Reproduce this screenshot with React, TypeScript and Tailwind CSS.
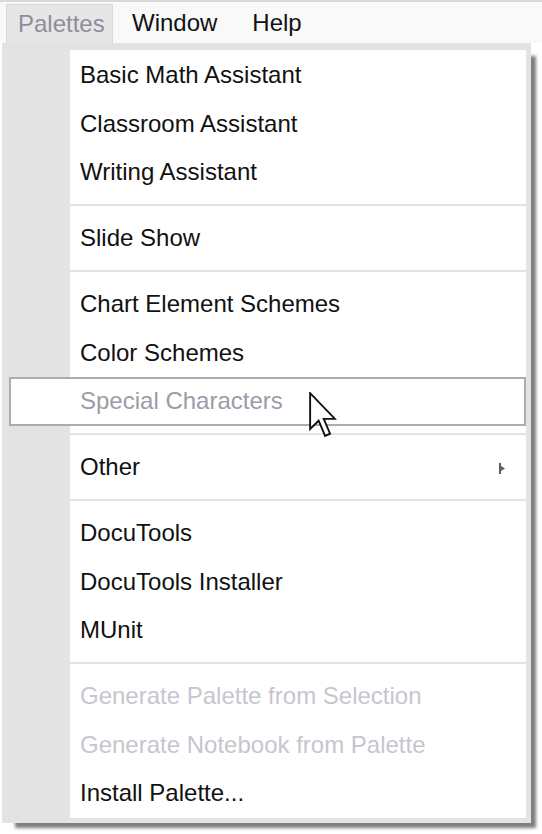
import React from "react";

type Item = { label: string; disabled?: boolean; submenu?: boolean; hover?: boolean };

const sections: Item[][] = [
  [{ label: "Basic Math Assistant" }, { label: "Classroom Assistant" }, { label: "Writing Assistant" }],
  [{ label: "Slide Show" }],
  [{ label: "Chart Element Schemes" }, { label: "Color Schemes" }, { label: "Special Characters", hover: true }],
  [{ label: "Other", submenu: true }],
  [{ label: "DocuTools" }, { label: "DocuTools Installer" }, { label: "MUnit" }],
  [
    { label: "Generate Palette from Selection", disabled: true },
    { label: "Generate Notebook from Palette", disabled: true },
    { label: "Install Palette..." },
  ],
];

function Cursor() {
  return (
    <svg
      className="absolute left-[239px] top-[15px] z-20"
      width="28"
      height="46"
      viewBox="0 0 12.5 20.5"
    >
      <path
        d="M0.5 0.5 V16.5 L4.3 12.8 L7.2 19.6 L9.4 18.6 L6.6 12 H11.6 Z"
        fill="#ffffff"
        stroke="#111111"
        strokeWidth="0.85"
        strokeLinejoin="miter"
      />
    </svg>
  );
}

function Row({ item }: { item: Item }) {
  return (
    <div className="relative h-[48.5px] flex items-center pl-[10px] pr-[20px]">
      {item.hover && (
        <div className="absolute left-[-61px] right-0 top-0 bottom-0 border-2 border-[#adada6] bg-white z-0" />
      )}
      <span
        className={
          "relative z-10 " +
          (item.hover ? "text-[#9c9ca8]" : item.disabled ? "text-[#c6c6ce]" : "text-[#111111]")
        }
      >
        {item.label}
      </span>
      {item.submenu && (
        <svg className="absolute right-[20px] top-[20px]" width="7" height="11" viewBox="0 0 7 11">
          <path d="M0 0 H2 V3 L6 5.5 L2 8 V11 H0 Z" fill="#5f5f5f" />
        </svg>
      )}
      {item.hover && <Cursor />}
    </div>
  );
}

export default function App() {
  return (
    <div
      className="w-[542px] min-h-[834px] bg-white text-[24px] leading-none"
      style={{ fontFamily: '"Liberation Sans", Arial, sans-serif' }}
    >
      <div className="h-[2px] bg-[#d9d9d9]" />
      <div className="h-[41px] bg-[#f9f9f9] flex items-stretch">
        <div className="ml-[6px] mt-[2px] w-[107px] bg-[#e6e6e6] border border-b-0 border-[#dadada] pl-[11px] flex items-center text-[#8e8e9a]">
          Palettes
        </div>
        <div className="ml-[19px] flex items-center text-[#111111]">Window</div>
        <div className="ml-[35px] flex items-center text-[#111111]">Help</div>
      </div>
      <div className="ml-[2px] w-[529px] bg-[#e3e3e3] pl-[68px] pr-[5px] pt-[7px] pb-[5px] shadow-[9px_9px_3px_-4px_rgba(0,0,0,0.5)]">
        <div className="flex flex-col gap-[2px]">
          {sections.map((sec, i) => (
            <div
              key={i}
              className={
                "bg-white " +
                (i === 0 ? "pt-[1px] pb-[7.75px]" : i === sections.length - 1 ? "pt-[7.75px] pb-[0px]" : "py-[7.75px]")
              }
            >
              {sec.map((item) => (
                <Row key={item.label} item={item} />
              ))}
            </div>
          ))}
        </div>
      </div>
    </div>
  );
}
